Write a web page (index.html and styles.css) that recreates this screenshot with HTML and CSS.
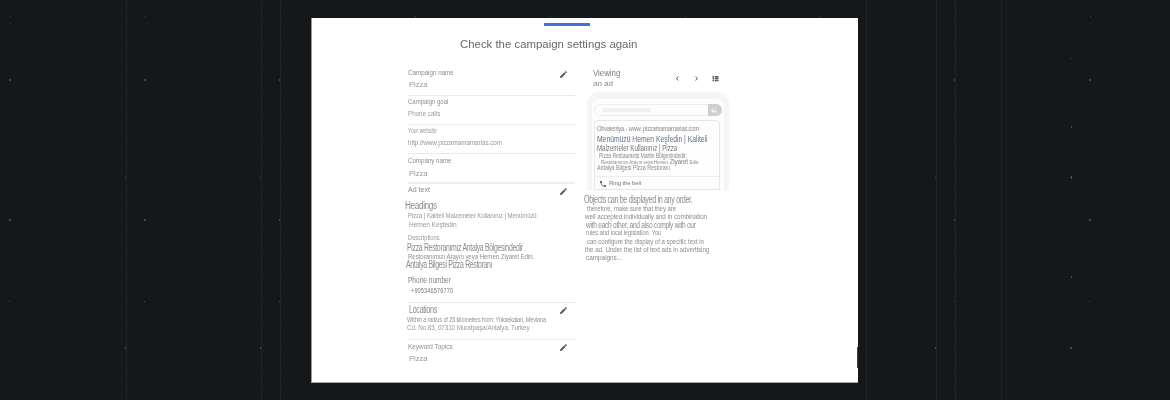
FILE: index.html
```html
<!DOCTYPE html>
<html lang="en">
<head>
<meta charset="utf-8">
<title>Check the campaign settings again</title>
<link rel="stylesheet" href="styles.css">
</head>
<body>
<svg class="backdrop" width="1170" height="400" aria-hidden="true">
  <defs>
    <pattern id="fine" width="23" height="23" x="10" y="0" patternUnits="userSpaceOnUse"><rect width="1" height="1" fill="#222324"/></pattern>
    <pattern id="dots" width="135" height="400" x="0" y="0" patternUnits="userSpaceOnUse">
      <rect x="10" y="16" width="1" height="1" fill="#333d66"/>
      <rect x="9" y="79" width="2" height="2" fill="#3c4674"/>
      <rect x="9" y="219" width="2" height="2" fill="#3c4674"/>
      <rect x="9" y="301" width="1" height="1" fill="#4a4c50"/>
      <rect x="126" y="58" width="1" height="1" fill="#333d66"/>
      <rect x="126" y="126" width="1" height="2" fill="#3a4678"/>
      <rect x="125" y="177" width="2" height="1" fill="#3a4678"/>
      <rect x="126" y="176" width="1" height="3" fill="#3f4f8c"/>
      <rect x="126" y="276" width="1" height="2" fill="#3a4678"/>
      <rect x="125" y="347" width="2" height="2" fill="#3c4674"/>
    </pattern>
  </defs>
  <rect width="1170" height="400" fill="url(#fine)"/>
  <rect width="1170" height="400" fill="url(#dots)"/>
  <g fill="#212224">
    <rect x="126" width="1" height="400"/><rect x="261" width="1" height="400"/><rect x="280" width="1" height="400"/>
    <rect x="866" width="1" height="400"/><rect x="936" width="1" height="400"/><rect x="955" width="1" height="400"/><rect x="1001" width="1" height="400"/>
  </g>
</svg>

<main class="card">
  <div class="content">
    <div class="progress"></div>
    <h1 class="title">Check the campaign settings again</h1>
    <div class="columns">
      <section class="summary">
        <div class="row">
          <svg class="edit" viewBox="0 0 24 24"><path d="M3 17.25V21h3.75L17.81 9.94l-3.75-3.75L3 17.25zM20.71 7.04a1 1 0 0 0 0-1.41l-2.34-2.34a1 1 0 0 0-1.41 0l-1.83 1.83 3.75 3.75 1.83-1.83z"/></svg>
          <span class="line label sx78">Campaign name</span>
          <span class="line value indent1 sx95">Pizza</span>
        </div>
        <div class="row">
          <span class="line label sx75">Campaign goal</span>
          <span class="line value sx78">Phone calls</span>
        </div>
        <div class="row">
          <span class="line label small sx78">Your website</span>
          <span class="line value tiny sx91">http://www.pizzamamamarias.com</span>
        </div>
        <div class="row heavy company">
          <span class="line label sx77">Company name</span>
          <span class="line value indent1 sx95">Pizza</span>
        </div>
        <div class="row adtext">
          <svg class="edit" viewBox="0 0 24 24"><path d="M3 17.25V21h3.75L17.81 9.94l-3.75-3.75L3 17.25zM20.71 7.04a1 1 0 0 0 0-1.41l-2.34-2.34a1 1 0 0 0-1.41 0l-1.83 1.83 3.75 3.75 1.83-1.83z"/></svg>
          <span class="line label sx88">Ad text</span>
          <span class="line big outdent3 gap4 sx82">Headings</span>
          <span class="line mid sx80">Pizza | Kaliteli Malzemeler Kullanınız | Menümüzü</span>
          <span class="line mid indent1 sx88">Hemen Keşfedin</span>
          <span class="line small desc sx82">Descriptions</span>
          <span class="line big tall outdent1 sx69">Pizza Restoranımız Antalya Bölgesindedir</span>
          <span class="line mini sx88">Restoranımızı Arayın veya Hemen Ziyaret Edin.</span>
          <span class="line big tall outdent2 sx69">Antalya Bilgesi Pizza Restoranı</span>
          <span class="line phone-label sx77">Phone number</span>
          <span class="line phone-value sx87">+905346576770</span>
        </div>
        <div class="row locations">
          <svg class="edit" viewBox="0 0 24 24"><path d="M3 17.25V21h3.75L17.81 9.94l-3.75-3.75L3 17.25zM20.71 7.04a1 1 0 0 0 0-1.41l-2.34-2.34a1 1 0 0 0-1.41 0l-1.83 1.83 3.75 3.75 1.83-1.83z"/></svg>
          <span class="line big indent1 sx72">Locations</span>
          <span class="line mini outdent1 sx78">Within a radius of 25 kilometers from: Yüksekalan, Mevlana</span>
          <span class="line mid outdent1 sx84">Cd. No.83, 07310 Muratpaşa/Antalya, Turkey</span>
        </div>
        <div class="row last">
          <svg class="edit" viewBox="0 0 24 24"><path d="M3 17.25V21h3.75L17.81 9.94l-3.75-3.75L3 17.25zM20.71 7.04a1 1 0 0 0 0-1.41l-2.34-2.34a1 1 0 0 0-1.41 0l-1.83 1.83 3.75 3.75 1.83-1.83z"/></svg>
          <span class="line label keyword sx80">Keyword Topics</span>
          <span class="line value indent1 keyval sx95">Pizza</span>
        </div>
      </section>

      <section class="preview">
        <header class="preview-head">
          <div class="viewing"><span class="line view-a sx87">Viewing</span><span class="line view-b">an ad</span></div>
          <div class="nav">
            <svg viewBox="0 0 24 24"><path d="M15.4 7.4 14 6l-6 6 6 6 1.4-1.4L10.8 12z"/></svg>
            <svg viewBox="0 0 24 24"><path d="M8.6 7.4 10 6l6 6-6 6-1.4-1.4 4.6-4.6z"/></svg>
            <svg viewBox="0 0 24 24"><path d="M4 5h4v4H4zM10 5h10v4H10zM4 10h4v4H4zM10 10h10v4H10zM4 15h4v4H4zM10 15h10v4H10z"/></svg>
          </div>
        </header>
        <div class="device">
          <div class="screen">
            <div class="search">
              <span class="search-fill"></span>
              <span class="search-btn"><svg viewBox="0 0 24 24"><path d="M15.5 14h-.8l-.3-.3A6.5 6.5 0 1 0 14 15.5l.3.3v.8l5 5 1.5-1.5-5-5zm-6 0a4.5 4.5 0 1 1 0-9 4.5 4.5 0 0 1 0 9z"/></svg></span>
            </div>
            <article class="ad">
              <span class="line ad-url sx73">Obvalenlya - www. pizzamamamarias.com</span>
              <span class="line ad-title sx75">Menümüzü Hemen Keşfedin | Kaliteli</span>
              <span class="line ad-title ad-title2 sx68">Malzemeler Kullanınız | Pizza</span>
              <span class="line ad-desc sx73">Pizza Restaurants Martin Bölgesindedir,</span>
              <span class="line ad-mix sx88"><span class="ad-tiny">Restoranımızı Arayın veya Hemen</span> Ziyaret <span class="ad-tiny">Edin.</span></span>
              <span class="line ad-foot sx75">Antalya Bilgesi Pizza Restoranı</span>
              <div class="ad-call">
                <svg viewBox="0 0 24 24"><path d="M6.6 10.8a15 15 0 0 0 6.6 6.6l2.2-2.2a1 1 0 0 1 1-.25 11.4 11.4 0 0 0 3.6.57 1 1 0 0 1 1 1V20a1 1 0 0 1-1 1A17 17 0 0 1 3 4a1 1 0 0 1 1-1h3.5a1 1 0 0 1 1 1c0 1.25.2 2.45.57 3.57a1 1 0 0 1-.25 1z"/></svg>
                <span>Ring the bell</span>
              </div>
            </article>
          </div>
        </div>
        <div class="notes">
          <span class="line note-big sx72">Objects can be displayed in any order.</span>
          <span class="line note n1 sx80">therefore, make sure that they are</span>
          <span class="line note sx83">well accepted individually and in combination</span>
          <span class="line note-mid sx73">with each other, and also comply with our</span>
          <span class="line note n2 sx76">rules and local legislation. You</span>
          <span class="line note n3 sx81">can configure the display of a specific text in</span>
          <span class="line note sx83">the ad. Under the list of text ads in advertising</span>
          <span class="line note n2 sx86">campaigns...</span>
        </div>
      </section>
    </div>
  </div>
  <span class="edge-mark"></span>
</main>
</body>
</html>
```

FILE: styles.css
```css
* { box-sizing: border-box; }

html, body { margin: 0; height: 400px; overflow: hidden; }

body {
  background: #161718;
  font-family: "Liberation Sans", Arial, sans-serif;
  color: #8a8a8a;
  position: relative;
}

.backdrop { position: absolute; left: 0; top: 0; display: block; }

.card {
  position: absolute;
  left: 311px;
  top: 18px;
  width: 547px;
  height: 365px;
  background: #fff;
  border-left: 1px solid #999;
  border-bottom: 1px solid #aaa;
  overflow: hidden;
}

.content { filter: blur(0.4px); padding-top: 5px; }

.progress { width: 46px; height: 3px; margin-left: 232px; background: #3d72dc; }

.title {
  margin: 11px 0 0 148px;
  font-size: 11.4px;
  line-height: 14px;
  font-weight: 400;
  color: #686868;
}

.columns { display: flex; margin: 16px 0 0 96px; }

.summary { width: 167px; flex: none; }

.line { display: block; width: max-content; white-space: nowrap; transform-origin: 0 50%; }

.sx68 { transform: scaleX(.68); }
.sx69 { transform: scaleX(.69); }
.sx72 { transform: scaleX(.72); }
.sx73 { transform: scaleX(.73); }
.sx75 { transform: scaleX(.75); }
.sx76 { transform: scaleX(.76); }
.sx77 { transform: scaleX(.77); }
.sx78 { transform: scaleX(.78); }
.sx80 { transform: scaleX(.8); }
.sx81 { transform: scaleX(.81); }
.sx82 { transform: scaleX(.82); }
.sx83 { transform: scaleX(.83); }
.sx84 { transform: scaleX(.84); }
.sx86 { transform: scaleX(.86); }
.sx87 { transform: scaleX(.87); }
.sx88 { transform: scaleX(.88); }
.sx91 { transform: scaleX(.91); }
.sx95 { transform: scaleX(.95); }

.row { position: relative; height: 29px; border-bottom: 1px solid #e9e9e9; }

.edit { position: absolute; right: 7px; top: 3px; width: 9px; height: 9px; fill: #5a5a5a; }

.label { font-size: 8px; line-height: 12px; color: #8c8c8c; }

.value { font-size: 8px; line-height: 11px; color: #999; }

.value.tiny { font-size: 7px; letter-spacing: -0.1px; }

.small { font-size: 6.5px; line-height: 12px; color: #999; }

.indent1 { margin-left: 1px; }
.outdent1 { margin-left: -1px; }
.outdent2 { margin-left: -2px; }
.outdent3 { margin-left: -3px; }

.row.heavy { height: 30px; border-bottom: 2px solid #efefef; }
.company .label { line-height: 14px; }
.company .value { line-height: 11px; }

.row.adtext { height: 119px; }

.big { font-size: 10px; line-height: 11px; letter-spacing: -0.45px; color: #8a8a8a; }
.tall { line-height: 10px; }
.gap4 { margin-top: 4px; }

.mid { font-size: 7.5px; line-height: 9px; letter-spacing: -0.1px; color: #999; }

.desc { margin-top: 3px; line-height: 11px; font-size: 7px; }

.mini { font-size: 7px; line-height: 7px; letter-spacing: -0.1px; color: #8f8f8f; }

.phone-label { margin-top: 5px; font-size: 8.5px; line-height: 11px; color: #808080; }

.phone-value { margin-left: 3px; font-size: 6.5px; line-height: 10px; color: #777; letter-spacing: 0.1px; }

.row.locations { height: 37px; }
.locations .big { line-height: 13px; }
.locations .mini { line-height: 8px; }
.locations .mid { line-height: 8px; }

.row.last { border-bottom: 0; height: 24px; }
.keyword { line-height: 14px; }
.keyval { line-height: 9px; }

.preview { margin-left: 9px; width: 146px; flex: none; }

.preview-head { display: flex; height: 25px; padding-left: 9px; }

.viewing { width: 80px; flex: none; }
.view-a { font-size: 9px; line-height: 12px; color: #7c7c7c; }
.view-b { font-size: 8px; line-height: 9px; color: #888; }

.nav { display: flex; gap: 10px; padding-top: 7px; }
.nav svg { width: 9px; height: 9px; fill: #5c5c5c; }

.device {
  height: 99px;
  width: 142px;
  margin-left: 3px;
  padding: 7px 5px 0;
  background: #f5f5f5;
  border-radius: 12px 12px 0 0;
  overflow: hidden;
}

.screen { background: #fdfdfd; border-radius: 8px 8px 0 0; height: 100%; padding: 5px 2px 0; }

.search {
  display: flex;
  justify-content: space-between;
  align-items: center;
  height: 12px;
  width: 128px;
  padding-left: 8px;
  border: 1px solid #eee;
  border-radius: 7px;
}

.search-fill { width: 48px; height: 4px; background: #f0f0f0; }

.search-btn {
  display: flex;
  align-items: center;
  justify-content: center;
  width: 14px;
  height: 12px;
  margin-right: -1px;
  background: #cfcfcf;
  border-radius: 0 7px 7px 0;
}
.search-btn svg { width: 8px; height: 8px; fill: #f4f4f4; }

.ad {
  margin-top: 4px;
  width: 126px;
  height: 70px;
  border: 1px solid #e6e6e6;
  border-radius: 4px 4px 0 0;
  padding: 3px 0 0 2px;
}

.ad-url { font-size: 8px; line-height: 10px; letter-spacing: -0.3px; color: #8a8a8a; }

.ad-title { font-size: 9px; line-height: 9px; margin-top: 1px; color: #5f6f92; }
.ad-title2 { margin-top: 0; color: #70757e; line-height: 8px; }

.ad-desc { margin-left: 2px; font-size: 7px; line-height: 7px; letter-spacing: -0.1px; color: #8a8a8a; }

.ad-mix { margin-left: 4px; font-size: 7.5px; line-height: 6px; letter-spacing: -0.3px; color: #8a8a8a; }
.ad-tiny { font-size: 5px; letter-spacing: 0; }

.ad-foot { font-size: 7px; line-height: 6px; color: #8a8a8a; }

.ad-call {
  display: flex;
  align-items: center;
  gap: 2px;
  margin: 5px 0 0 -2px;
  padding: 2px 0 0 4px;
  border-top: 1px solid #ececec;
  font-size: 6px;
  line-height: 9px;
  letter-spacing: -0.1px;
  color: #777;
}
.ad-call svg { width: 8px; height: 8px; fill: #4d5560; flex: none; }

.notes { padding-top: 4px; }

.note-big { font-size: 10px; line-height: 10px; letter-spacing: -0.5px; color: #8c8c8c; }
.note { margin-left: 1px; font-size: 7.5px; line-height: 8px; color: #8c8c8c; letter-spacing: -0.05px; }
.note-mid { margin-left: 2px; font-size: 9px; line-height: 8px; letter-spacing: -0.35px; color: #8a8a8a; }
.n1 { margin-left: 3px; }
.n2 { margin-left: 2px; }
.n3 { margin-left: 3px; margin-top: 1px; }

.edge-mark { position: absolute; right: 0; top: 329px; width: 1px; height: 21px; background: #3a4260; }
```
